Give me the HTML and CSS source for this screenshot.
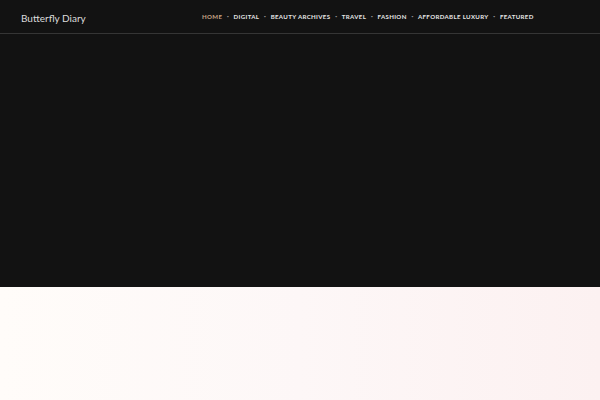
FILE: index.html
```html
<!DOCTYPE html>
<html>
<head>
<meta charset="utf-8">
<link rel="stylesheet" href="styles.css">
</head>
<body>
<div class="hero">
  <header class="header">
    <div class="logo">Butterfly Diary</div>
    <nav class="nav">
      <a class="item active">Home</a><span class="dot">•</span>
      <a class="item">Digital</a><span class="dot">•</span>
      <a class="item">Beauty Archives</a><span class="dot">•</span>
      <a class="item">Travel</a><span class="dot">•</span>
      <a class="item">Fashion</a><span class="dot">•</span>
      <a class="item">Affordable Luxury</a><span class="dot">•</span>
      <a class="item">Featured</a>
    </nav>
  </header>
</div>
<div class="banner"></div>
</body>
</html>
```
FILE: styles.css
```css
html, body { margin: 0; padding: 0; }
body { background: #fdf6f4; font-family: Lato, "Open Sans", sans-serif; overflow: hidden; }
.hero { height: 287px; background: #121212; }
.header { height: 33px; border-bottom: 1px solid #353535; display: flex; align-items: center; padding-left: 21px; }
.logo { color: #dcdcdc; font-size: 10px; margin-top: 2px; width: 181px; }
.nav { display: flex; align-items: center; margin-top: -1px; }
.item { color: #e6e6e6; font-size: 6.1px; font-weight: 700; text-transform: uppercase; letter-spacing: 0.35px; }
.item.active { color: #c7a486; }
.dot { color: #8a8a8a; font-size: 4px; width: 11.3px; text-align: center; }
.banner { height: 113px; background: linear-gradient(90deg, #fffcf9 0%, #fdf7f7 50%, #fcf1f1 100%); }
```
